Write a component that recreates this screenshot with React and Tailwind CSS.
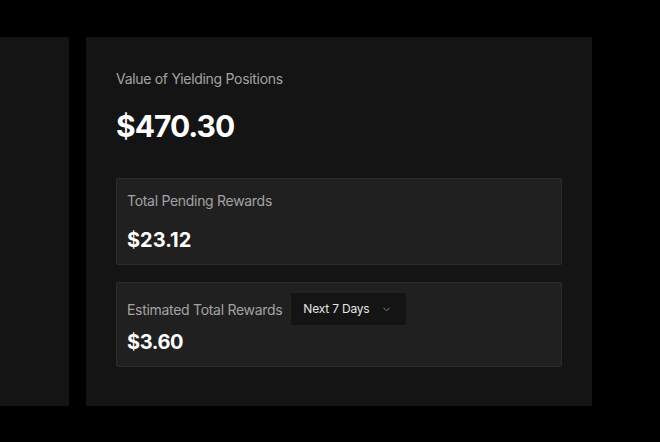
import { ChevronDown } from "lucide-react";

export default function App() {
  return (
    <div
      className="w-[660px] h-[442px] bg-black pt-[37px] flex gap-[17px]"
      style={{ fontFamily: "Inter, 'Noto Sans', sans-serif" }}
    >
      {/* left panel edge */}
      <div className="w-[69px] h-[369px] bg-[#141414]" />

      {/* main panel */}
      <div className="w-[506px] h-[369px] bg-[#141414] px-[30px] pt-[32px]">
        <p className="text-[14px] leading-5 text-[#a3a3a3] tracking-[-0.3px]">
          Value of Yielding Positions
        </p>
        <p className="mt-[19px] text-[30px] leading-9 font-bold text-white tracking-[-1px]">
          $470.30
        </p>

        {/* pending */}
        <div className="mt-[34px] border border-[#2c2c2c] rounded-[2px] bg-[#202020] px-[10px] pt-[12px] pb-[10px]">
          <p className="text-[14px] leading-5 text-[#a3a3a3] tracking-[-0.3px]">
            Total Pending Rewards
          </p>
          <p className="mt-[15px] text-[20px] leading-7 font-bold text-white">
            $23.12
          </p>
        </div>

        {/* estimated */}
        <div className="mt-[17px] border border-[#2c2c2c] rounded-[2px] bg-[#202020] px-[10px] pt-[10px] pb-[10px]">
          <div className="flex items-center gap-[9px]">
            <p className="text-[14px] leading-5 text-[#a3a3a3] tracking-[-0.3px] pt-[2px]">
              Estimated Total Rewards
            </p>
            <button className="h-8 w-[115px] bg-[#141414] rounded-[2px] flex items-center pl-3 gap-2 text-[12px] text-[#e5e5e5] tracking-[-0.2px]">
              Next 7 Days
              <ChevronDown size={11} className="text-[#8a8a8a] ml-1" />
            </button>
          </div>
          <p className="mt-[3px] text-[20px] leading-7 font-bold text-white tracking-[-0.4px]">
            $3.60
          </p>
        </div>
      </div>
    </div>
  );
}
